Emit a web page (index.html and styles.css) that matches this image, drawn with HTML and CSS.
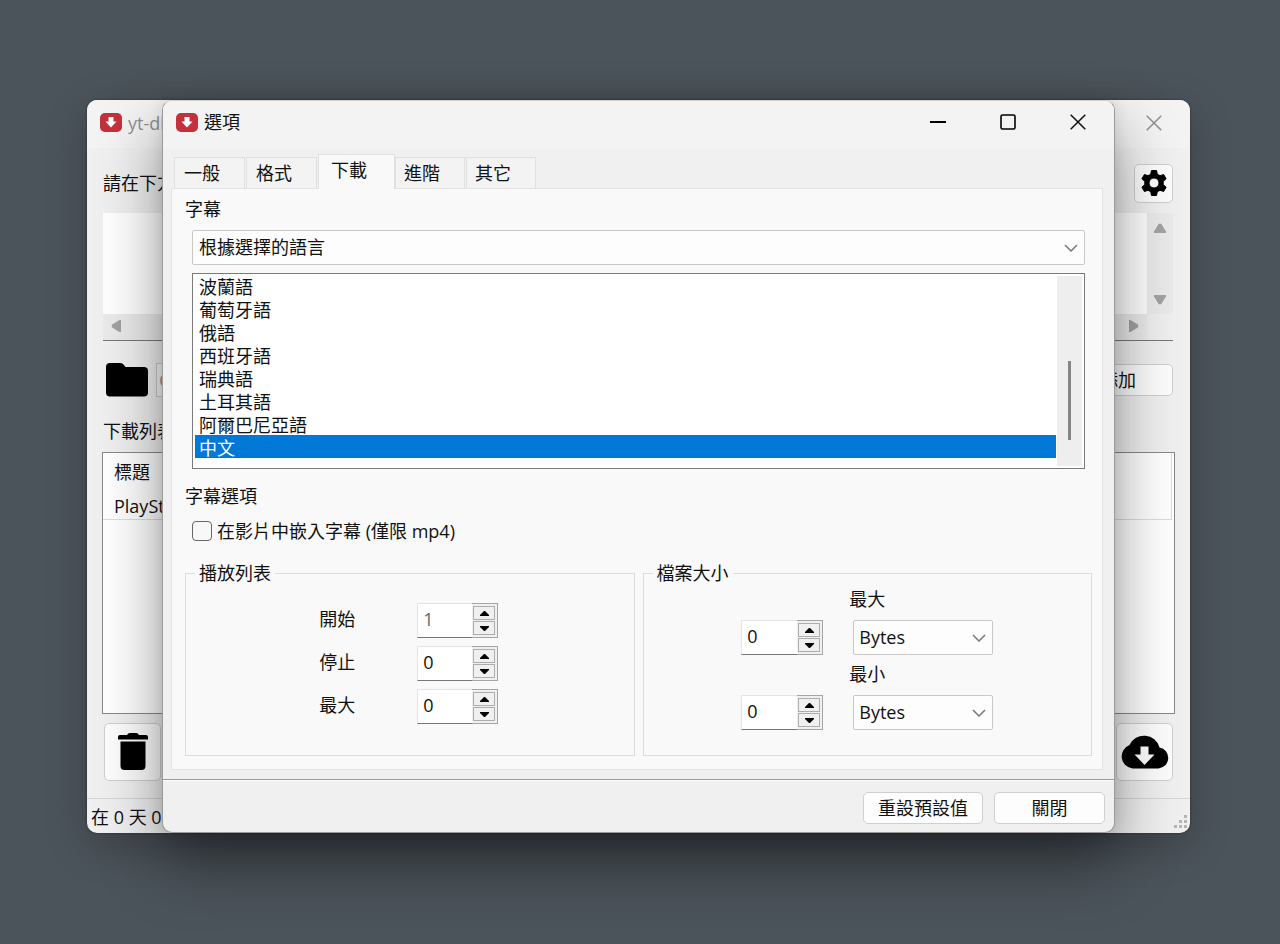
FILE: index.html
```html
<!DOCTYPE html>
<html lang="zh-Hant">
<head>
<meta charset="utf-8">
<title>選項</title>
<link rel="stylesheet" href="styles.css">
</head>
<body class="desktop">

<svg class="defs" aria-hidden="true">
  <symbol id="logo" viewBox="0 0 22 19">
    <rect width="22" height="19" rx="5" fill="#c4313c"/>
    <path d="M8.500 4h5v4.500h3L11 14.500 5.500 8.500h3z" fill="#fff"/>
  </symbol>
  <symbol id="close" viewBox="0 0 16 16"><path d="M.7.7l14.600 14.600M15.300.7.7 15.300" fill="none" stroke="currentColor" stroke-width="1.500"/></symbol>
  <symbol id="up" viewBox="0 0 14 10"><path d="M5.800.8h2.400L13 8.500V10H1V8.500z" fill="currentColor"/></symbol>
  <symbol id="left" viewBox="0 0 10 14"><path d="M.8 5.800v2.400L8.500 13H10V1H8.500z" fill="currentColor"/></symbol>
  <symbol id="arrow" viewBox="0 0 9 5"><path d="M4 0h1L9 4v1H0V4z" fill="#000"/></symbol>
</svg>

<main class="window main-window">
  <header class="titlebar">
    <svg class="logo"><use href="#logo"/></svg>
    <span class="title muted">yt-dlg</span>
    <button class="caption muted" aria-label="關閉"><svg width="16" height="16"><use href="#close"/></svg></button>
  </header>
  <div class="main-body">
    <div class="row url-row">
      <label for="urls">請在下方</label>
      <button class="button gear" aria-label="設定">
        <svg width="26" height="26" viewBox="0 0 26 26"><path stroke="#000" stroke-linejoin="round" fill-rule="evenodd" d="M10.500.5h5l.8 3.800 2.700 1.400 3.600-1.200 2.500 4.300-2.900 2.600v3.200l2.900 2.600-2.500 4.300-3.600-1.200-2.700 1.400-.8 3.800h-5l-.8-3.800L7 20.300l-3.600 1.200-2.500-4.300 2.900-2.600v-3.200L.9 8.800l2.500-4.300L7 5.700l2.700-1.400zM13 8a5 5 0 1 0 0 10 5 5 0 0 0 0-10z"/></svg>
      </button>
    </div>
    <div class="url-box">
      <textarea id="urls"></textarea>
      <div class="vbar"><svg width="14" height="10"><use href="#up"/></svg><svg class="flip" width="14" height="10"><use href="#up"/></svg></div>
      <div class="hbar"><svg width="10" height="14"><use href="#left"/></svg><svg class="flip" width="10" height="14"><use href="#left"/></svg></div>
    </div>
    <div class="row path-row">
      <button class="plain" aria-label="資料夾"><svg width="42" height="34" viewBox="0 0 42 34"><path d="M4 0h10.500q2 0 3 1.500L19.500 4H38q4 0 4 4v21.500q0 4-4 4H4q-4 0-4-4V4q0-4 4-4z"/></svg></button>
      <input class="path" aria-label="路徑" value="C:">
      <button class="button add">添加</button>
    </div>
    <div class="list-label">下載列表</div>
    <div class="download-list">
      <div class="list-head">
        <div class="cell">標題</div>
        <div class="cell">PlaySta</div>
      </div>
    </div>
    <div class="row action-row">
      <button class="button big" aria-label="刪除"><svg width="30" height="38" viewBox="0 0 30 38"><path d="M9 2Q10 0 12 0h6q2 0 3 2h7q2 0 2 2v2.500H0V4q0-2 2-2zM2.500 8.500h25V33q0 4-4 4h-17q-4 0-4-4z"/></svg></button>
      <button class="button big" aria-label="下載"><svg width="49" height="34" viewBox="0 0 49 34"><path d="M12.500 33.500A12.200 12.200 0 0 1 9.500 10 16 16 0 0 1 39.500 12.500 10.600 10.600 0 0 1 38.500 33.500z"/><path d="M20.500 11.500h8v8h6L24.500 30l-10-10.500h6z" fill="#fff"/></svg></button>
    </div>
  </div>
  <footer class="status">
    <span>在 0 天 0</span>
    <svg width="14" height="14" viewBox="0 0 14 14" fill="#b4b4b4"><path d="M10 0h3v3h-3zM5 5h3v3H5zM10 5h3v3h-3zM0 10h3v3H0zM5 10h3v3H5zM10 10h3v3h-3z"/></svg>
  </footer>
</main>

<section class="window dialog" role="dialog" aria-label="選項">
  <header class="titlebar">
    <svg class="logo"><use href="#logo"/></svg>
    <h1 class="title">選項</h1>
    <button class="caption" aria-label="最小化"><svg width="16" height="16"><path d="M0 8h16" stroke="#000" stroke-width="2"/></svg></button>
    <button class="caption" aria-label="最大化"><svg width="16" height="16"><rect x="1" y="1" width="14" height="14" rx="1.500" fill="none" stroke="#000" stroke-width="1.600"/></svg></button>
    <button class="caption" aria-label="關閉"><svg width="16" height="16"><use href="#close"/></svg></button>
  </header>
  <div class="dialog-body">
    <nav class="tabs" role="tablist">
      <button class="tab" role="tab">一般</button>
      <button class="tab" role="tab">格式</button>
      <button class="tab active" role="tab" aria-selected="true">下載</button>
      <button class="tab" role="tab">進階</button>
      <button class="tab" role="tab">其它</button>
    </nav>
    <div class="panel" role="tabpanel">
      <label class="heading" for="mode">字幕</label>
      <div class="indent">
        <select id="mode" class="combo"><option>根據選擇的語言</option></select>
        <div class="listbox">
          <select class="languages" size="8" aria-label="語言">
            <option>波蘭語</option>
            <option>葡萄牙語</option>
            <option>俄語</option>
            <option>西班牙語</option>
            <option>瑞典語</option>
            <option>土耳其語</option>
            <option>阿爾巴尼亞語</option>
            <option selected>中文</option>
          </select>
          <div class="track"><div class="thumb"></div></div>
        </div>
      </div>
      <div class="heading">字幕選項</div>
      <label class="check"><input type="checkbox">在影片中嵌入字幕 (僅限 mp4)</label>
      <div class="groups">
        <fieldset class="group">
          <legend>播放列表</legend>
          <div class="range">
            <label for="start">開始</label>
            <div class="spin"><input id="start" class="dim" value="1"><div class="steps"><button aria-label="增加"><svg><use href="#arrow"/></svg></button><button aria-label="減少"><svg class="flip"><use href="#arrow"/></svg></button></div></div>
            <label for="stop">停止</label>
            <div class="spin"><input id="stop" value="0"><div class="steps"><button aria-label="增加"><svg><use href="#arrow"/></svg></button><button aria-label="減少"><svg class="flip"><use href="#arrow"/></svg></button></div></div>
            <label for="max">最大</label>
            <div class="spin"><input id="max" value="0"><div class="steps"><button aria-label="增加"><svg><use href="#arrow"/></svg></button><button aria-label="減少"><svg class="flip"><use href="#arrow"/></svg></button></div></div>
          </div>
        </fieldset>
        <fieldset class="group">
          <legend>檔案大小</legend>
          <div class="sizes">
            <label for="size-max">最大</label>
            <div class="spin"><input id="size-max" value="0"><div class="steps"><button aria-label="增加"><svg><use href="#arrow"/></svg></button><button aria-label="減少"><svg class="flip"><use href="#arrow"/></svg></button></div></div>
            <select class="combo unit" aria-label="最大單位"><option>Bytes</option></select>
            <label for="size-min">最小</label>
            <div class="spin"><input id="size-min" value="0"><div class="steps"><button aria-label="增加"><svg><use href="#arrow"/></svg></button><button aria-label="減少"><svg class="flip"><use href="#arrow"/></svg></button></div></div>
            <select class="combo unit" aria-label="最小單位"><option>Bytes</option></select>
          </div>
        </fieldset>
      </div>
    </div>
  </div>
  <footer class="dialog-footer">
    <button class="button reset">重設預設值</button>
    <button class="button done">關閉</button>
  </footer>
</section>

</body>
</html>
```
FILE: styles.css
```css
* { box-sizing: border-box; }

body, button, input, select, textarea {
  font: 18px/24px "Open Sans", "Noto Sans CJK TC", sans-serif;
  color: #111;
}

.desktop {
  display: grid;
  min-height: 100vh;
  margin: 0;
  padding: 100px 90px 111px 87px;
  background: #4c545b;
}

.defs { position: absolute; width: 0; height: 0; }
.flip { transform: rotate(180deg); }

/* Windows share one grid cell; the dialog sits in front */
.window {
  grid-area: 1 / 1;
  display: flex;
  flex-direction: column;
  min-width: 0;
  overflow: hidden;
  border-radius: 10px;
  background: #f0f0f0;
}

.main-window { box-shadow: 0 0 2px #222, 0 12px 40px rgba(0, 0, 0, .25); }

.dialog {
  z-index: 1;
  margin: 0 75px;
  border: 1px solid #9a9a9a;
  border-top-color: #d0d0d0;
  box-shadow: 0 30px 64px rgba(0, 0, 0, .42), 0 0 16px rgba(0, 0, 0, .1);
}

.titlebar {
  display: flex;
  align-items: center;
  height: 48px;
  padding: 0 13px 3px;
  background: #f3f3f3;
}
.dialog .titlebar { padding-bottom: 6px; }
.logo { width: 22px; height: 19px; }
.title { flex: 1; margin: 0 0 0 6px; font-size: 18px; font-weight: 400; }
.muted, .caption.muted { color: #8f8f8f; }
.caption {
  display: flex;
  justify-content: center;
  width: 46px;
  margin-left: 24px;
  padding: 0;
  border: 0;
  background: none;
}

.button {
  display: flex;
  align-items: center;
  justify-content: center;
  padding: 0;
  border: 1px solid #cfcfcf;
  border-radius: 5px;
  background: #fdfdfd;
}

/* Main window */
.main-body { display: flex; flex: 1; flex-direction: column; padding: 16px 17px 17px 16px; }
.row { display: flex; align-items: center; justify-content: space-between; }
.url-row { height: 38px; }
.gear { width: 39px; height: 39px; }
.url-box {
  display: grid;
  grid-template: 101px 26px / 1fr 26px;
  margin-top: 11px;
  border-bottom: 1px solid #777;
  color: #a2a2a2;
}
.url-box textarea { padding: 4px; border: 0; resize: none; background: #fff; }
.vbar, .hbar { display: flex; align-items: center; justify-content: space-between; background: #ebebeb; }
.vbar { flex-direction: column; padding: 10px 0 9px; }
.hbar { padding: 0 8px 2px; }
.path-row { height: 34px; margin-top: 22px; padding-left: 3px; }
.plain { display: flex; padding: 0; border: 0; background: none; }
.path { flex: 1; min-width: 0; height: 34px; margin: 0 8px; border: 1px solid #ccc; background: #f8f8f8; color: #999; }
.add { width: 110px; height: 32px; }
.list-label { margin: 22px 0 9px; }
.download-list { flex: 1; margin: 0 -2px 0 -1px; border: 1px solid #888; background: #fff; }
.list-head { margin-right: 2px; padding: 7px 0 0 11px; border: 1px solid #ddd; border-width: 0 1px 1px 0; }
.cell + .cell { margin-top: 10px; padding-bottom: 1px; }
.action-row { margin-top: 9px; padding-left: 1px; }
.big { width: 57px; height: 58px; }
.status {
  display: flex;
  align-items: end;
  justify-content: space-between;
  height: 35px;
  padding: 0 2px 4px 4px;
  border-top: 1px solid #d5d5d5;
}

/* Dialog */
.dialog-body { flex: 1; padding: 5px 11px 9px 8px; }
.tabs { display: flex; align-items: end; padding-left: 3px; }
.tab {
  width: 71px;
  height: 31px;
  margin-right: 1px;
  padding: 0 0 0 9px;
  border: 1px solid #e0e0e0;
  border-bottom: 0;
  background: #f3f3f3;
  text-align: left;
  white-space: nowrap;
}
.tab.active { width: 77px; height: 35px; margin: 0 0 -1px; padding: 0 0 5px 12px; background: #f9f9f9; z-index: 1; }
.tab:nth-child(n+4) { width: 70px; padding-left: 8px; }
.panel { display: flex; flex-direction: column; padding: 8px 10px 13px 13px; border: 1px solid #e3e3e3; background: #f9f9f9; }
.heading { line-height: 24px; }
.indent { display: grid; gap: 8px; margin: 9px 7px 15px 7px; }
.combo {
  height: 35px;
  padding: 0 6px 2px;
  border: 1px solid #c8c8c8;
  border-radius: 2px;
  appearance: none;
  background: #fdfdfd url("data:image/svg+xml,%3Csvg xmlns='http://www.w3.org/2000/svg' width='14' height='8'%3E%3Cpath d='M1 1l6 6 6-6' fill='none' stroke='%23777' stroke-width='1.500'/%3E%3C/svg%3E") no-repeat right 6px center;
}
.combo.unit { padding: 0 5px 1px; }
.listbox { display: flex; height: 196px; padding: 0 2px 2px; border: 1px solid #7a7a7a; background: #fff; }
.languages { flex: 1; height: 100%; padding: 0; border: 0; outline: 0; overflow: hidden; background: #fff; }
.languages option { display: flex; align-items: center; height: 23px; min-height: 0; padding: 0 4px; }
.languages option:checked { background: #0078d7 linear-gradient(#0078d7, #0078d7); color: #fff; }
.track { width: 25px; margin: 2px 0 0 1px; padding: 85px 0 0 11px; background: #eee; }
.thumb { width: 3px; height: 79px; background: #858585; }
.check { display: flex; align-items: center; margin: 11px 0 0 7px; }
.check input { width: 20px; height: 20px; margin: 0 5px 0 0; border: 1px solid #666; border-radius: 4px; appearance: none; background: #f8f8f8; }
.groups { display: grid; grid-template-columns: 1fr 1fr; gap: 8px; margin-top: 18px; }
.group { min-width: 0; margin: 0; padding: 0 9px; border: 1px solid #dcdcdc; }
.group legend { padding: 0 4px; }
.range, .sizes { display: grid; justify-content: center; align-items: center; }
.range { grid-template-columns: 98px 81px; gap: 8px 0; padding: 18px 2px 0 0; }
.range label { padding-bottom: 4px; }
.sizes { grid-template-columns: 82px 140px; column-gap: 30px; padding: 0 0 20px; }
.sizes label { grid-column: 2; height: 33px; margin: 2px 0 0 -4px; }
.sizes .unit, .sizes .spin { margin-bottom: 5px; }
.spin { display: flex; height: 35px; }
.spin input { flex: 1; width: 0; padding: 0 5px 4px; border: solid #e4e4e4; border-width: 1px 0 1px 1px; border-bottom-color: #777; background: #fff; }
.spin .dim { color: #666; }
.steps { display: flex; flex-direction: column; justify-content: space-between; width: 26px; padding: 2px 2px 2px 1px; border: 1px solid #a5a5a5; border-left: 0; background: #f0f0f0; }
.steps button { display: flex; align-items: center; justify-content: center; height: 14px; padding: 0; border: 1px solid #adadad; background: #f0f0f0; }
.steps svg { width: 9px; height: 5px; }
.dialog-footer {
  display: flex;
  justify-content: end;
  gap: 11px;
  height: 53px;
  padding: 12px 9px 0;
  border-top: 1px solid #999;
  box-shadow: inset 0 1px #fff;
}
.dialog-footer .button { height: 32px; }
.reset { width: 120px; }
.done { width: 111px; }
```
